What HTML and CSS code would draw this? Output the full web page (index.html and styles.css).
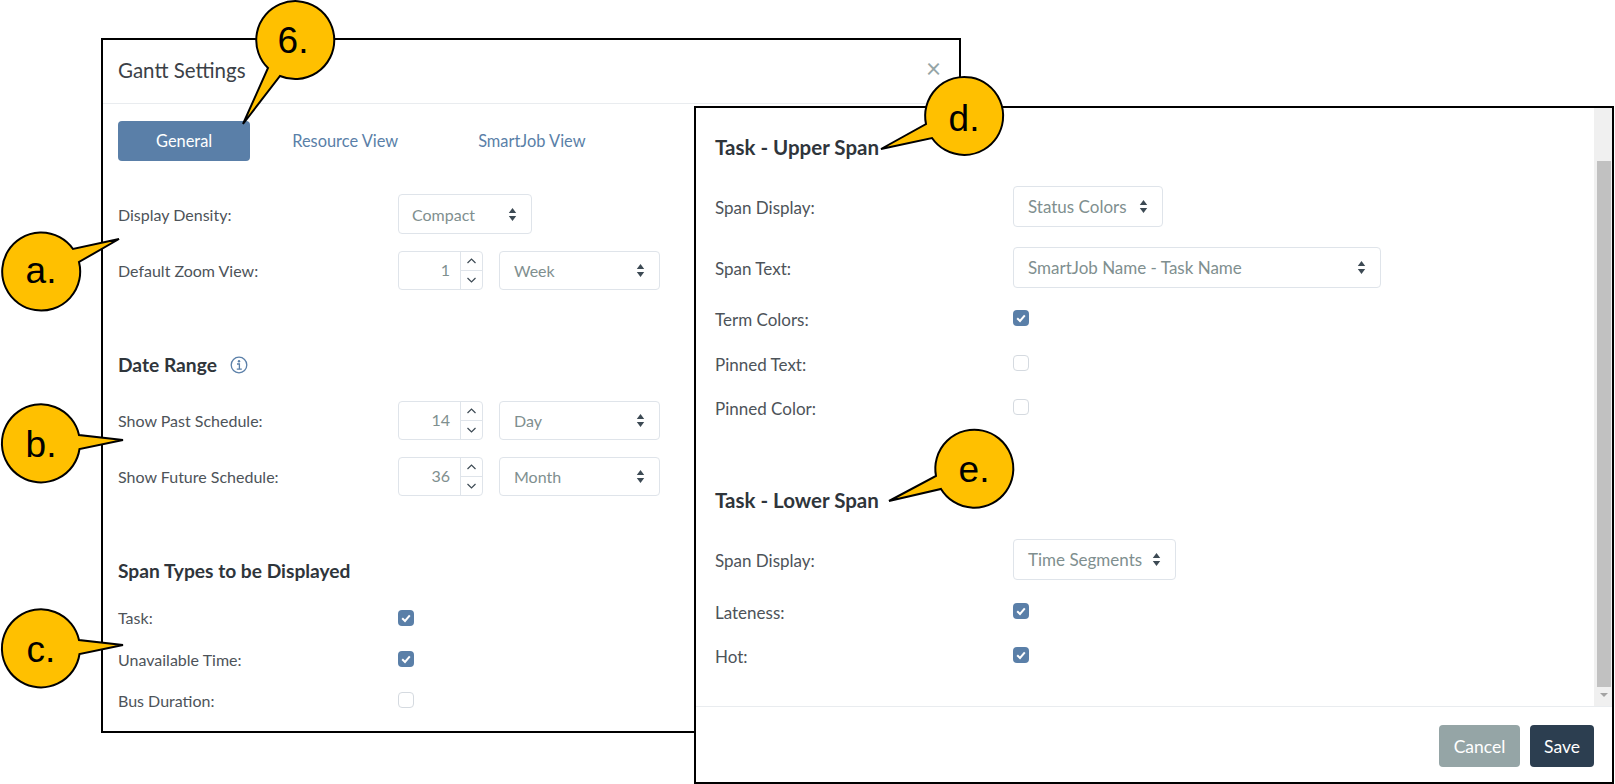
FILE: index.html
```html
<!DOCTYPE html>
<html lang="en">

<head>
  <meta charset="UTF-8">
  <title>Gantt Settings</title>
  <link rel="stylesheet" href="styles.css">
</head>

<body>
  <!-- General tab -->
  <section class="window window-general">
    <header class="window-header">
      <h2>Gantt Settings</h2>
      <span class="close">&times;</span>
    </header>
    <nav class="tabs">
      <a class="tab active">General</a>
      <a class="tab">Resource View</a>
      <a class="tab">SmartJob View</a>
    </nav>

    <div class="row density-row">
      <span class="label">Display Density:</span>
      <div class="select select-density"><span>Compact</span><svg class="carets" viewBox="0 0 8 14"><path d="M4 0 8 5.500H0zM4 14 0 8.500h8z"/></svg></div>
    </div>
    <div class="row row-next">
      <span class="label">Default Zoom View:</span>
      <div class="spinner"><span class="value">1</span><div class="spin"><svg viewBox="0 0 10 6"><path d="M1 5 5 1l4 4"/></svg><svg viewBox="0 0 10 6"><path d="M1 1l4 4 4-4"/></svg></div></div>
      <div class="select select-unit"><span>Week</span><svg class="carets" viewBox="0 0 8 14"><path d="M4 0 8 5.500H0zM4 14 0 8.500h8z"/></svg></div>
    </div>

    <h3 class="heading">Date Range
      <svg class="info" viewBox="0 0 18 18"><circle cx="9" cy="9" r="7.800"/><path d="M7 8h2.400v5M6.800 13.200h5"/><circle class="dot" cx="9" cy="5.300" r="1.200"/></svg>
    </h3>
    <div class="row row-first">
      <span class="label">Show Past Schedule:</span>
      <div class="spinner"><span class="value">14</span><div class="spin"><svg viewBox="0 0 10 6"><path d="M1 5 5 1l4 4"/></svg><svg viewBox="0 0 10 6"><path d="M1 1l4 4 4-4"/></svg></div></div>
      <div class="select select-unit"><span>Day</span><svg class="carets" viewBox="0 0 8 14"><path d="M4 0 8 5.500H0zM4 14 0 8.500h8z"/></svg></div>
    </div>
    <div class="row row-next">
      <span class="label">Show Future Schedule:</span>
      <div class="spinner"><span class="value">36</span><div class="spin"><svg viewBox="0 0 10 6"><path d="M1 5 5 1l4 4"/></svg><svg viewBox="0 0 10 6"><path d="M1 1l4 4 4-4"/></svg></div></div>
      <div class="select select-unit"><span>Month</span><svg class="carets" viewBox="0 0 8 14"><path d="M4 0 8 5.500H0zM4 14 0 8.500h8z"/></svg></div>
    </div>

    <h3 class="heading">Span Types to be Displayed</h3>
    <div class="check-row check-first">
      <span class="label">Task:</span>
      <span class="check on"><svg viewBox="0 0 16 16"><path d="M4.200 8.300 7 11l4.800-5.600"/></svg></span>
    </div>
    <div class="check-row">
      <span class="label">Unavailable Time:</span>
      <span class="check on"><svg viewBox="0 0 16 16"><path d="M4.200 8.300 7 11l4.800-5.600"/></svg></span>
    </div>
    <div class="check-row">
      <span class="label">Bus Duration:</span>
      <span class="check"></span>
    </div>
  </section>

  <!-- Resource view, scrolled -->
  <section class="window window-spans">
    <div class="scroll-area">
      <div class="span-form">
        <h3 class="heading heading-top">Task - Upper Span</h3>
        <div class="row row-tall row-first-tall">
          <span class="label">Span Display:</span>
          <div class="select select-status"><span>Status Colors</span><svg class="carets" viewBox="0 0 8 14"><path d="M4 0 8 5.500H0zM4 14 0 8.500h8z"/></svg></div>
        </div>
        <div class="row row-tall row-next-tall">
          <span class="label">Span Text:</span>
          <div class="select select-text"><span>SmartJob Name - Task Name</span><svg class="carets" viewBox="0 0 8 14"><path d="M4 0 8 5.500H0zM4 14 0 8.500h8z"/></svg></div>
        </div>
        <div class="check-row check-term">
          <span class="label">Term Colors:</span>
          <span class="check on"><svg viewBox="0 0 16 16"><path d="M4.200 8.300 7 11l4.800-5.600"/></svg></span>
        </div>
        <div class="check-row check-pinned">
          <span class="label">Pinned Text:</span>
          <span class="check"></span>
        </div>
        <div class="check-row check-color">
          <span class="label">Pinned Color:</span>
          <span class="check"></span>
        </div>

        <h3 class="heading heading-lower">Task - Lower Span</h3>
        <div class="row row-tall row-first-tall">
          <span class="label">Span Display:</span>
          <div class="select select-segments"><span>Time Segments</span><svg class="carets" viewBox="0 0 8 14"><path d="M4 0 8 5.500H0zM4 14 0 8.500h8z"/></svg></div>
        </div>
        <div class="check-row check-late">
          <span class="label">Lateness:</span>
          <span class="check on"><svg viewBox="0 0 16 16"><path d="M4.200 8.300 7 11l4.800-5.600"/></svg></span>
        </div>
        <div class="check-row check-late">
          <span class="label">Hot:</span>
          <span class="check on"><svg viewBox="0 0 16 16"><path d="M4.200 8.300 7 11l4.800-5.600"/></svg></span>
        </div>
      </div>
      <div class="scrollbar">
        <div class="thumb"></div>
        <div class="arrow"></div>
      </div>
    </div>
    <footer class="window-footer">
      <button class="btn btn-cancel">Cancel</button>
      <button class="btn btn-save">Save</button>
    </footer>
  </section>

  <!-- Callouts drawn over the screenshot -->
  <svg class="callouts" viewBox="0 0 1615 784">
    <path d="M268 68A39 39 0 1 1 280 76L243 124Z"/>
    <text x="293" y="53">6.</text>
    <path d="M79 262A39 39 0 1 1 73 249L119 239Z"/>
    <text x="41" y="283">a.</text>
    <path d="M79.500 449A39 39 0 1 1 79 435L123 440Z"/>
    <text x="41" y="457">b.</text>
    <path d="M79.500 654A39 39 0 1 1 79 640L123 645Z"/>
    <text x="41" y="662">c.</text>
    <path d="M926 124A39 39 0 1 1 932 138L881 149Z"/>
    <text x="964" y="131">d.</text>
    <path d="M936 476A39 39 0 1 1 941 489L889 501Z"/>
    <text x="974" y="482">e.</text>
  </svg>
</body>

</html>
```

FILE: styles.css
```css
/* Page */
body {
  margin: 0;
  width: 1615px;
  height: 784px;
  position: relative;
  overflow: hidden;
  background-color: #fff;
  font-family: 'Lato', sans-serif;
  font-size: 16px;
  color: #4d5359;
}

/* Windows */
.window {
  position: absolute;
  box-sizing: border-box;
  background-color: #fff;
  border: 2px solid #000;
}

.window-general {
  left: 101px;
  top: 38px;
  width: 860px;
  height: 695px;
  padding: 0 15px;
}

.window-spans {
  left: 694px;
  top: 106px;
  width: 920px;
  height: 678px;
  display: flex;
  flex-direction: column;
  font-size: 17px;
}

.window-header {
  display: flex;
  justify-content: space-between;
  align-items: center;
  height: 63px;
  margin: 0 -15px;
  padding: 0 18px 0 15px;
  border-bottom: 1px solid #e9ecef;
}

.window-header h2 {
  margin: 0 0 4px;
  font-size: 20.500px;
  font-weight: 400;
  color: #3b4147;
}

.close {
  font-size: 26px;
  line-height: 1;
  margin-bottom: 8px;
  color: #95a5a6;
}

/* Tabs */
.tabs {
  display: flex;
  gap: 4px;
  margin-top: 17px;
}

.tab {
  height: 40px;
  line-height: 40px;
  padding: 0 38px;
  border-radius: 4px;
  font-size: 16.400px;
  color: #5a7fa8;
}

.tab.active {
  background-color: #5a7fa8;
  color: #fff;
}

/* Form rows */
.row {
  display: flex;
  align-items: center;
  height: 39px;
}

.density-row {
  height: 40px;
  margin-top: 33px;
}

.row-next {
  margin-top: 17px;
}

.row-first {
  margin-top: 24px;
}

.label {
  flex: 0 0 280px;
}

.heading {
  margin: 63px 0 0;
  font-size: 19.200px;
  line-height: 24px;
  font-weight: 700;
  color: #2f353b;
}

.info {
  width: 18px;
  height: 18px;
  margin-left: 8px;
  vertical-align: -2px;
  fill: none;
  stroke: #5a7fa8;
  stroke-width: 1.300;
}

.info .dot {
  fill: #5a7fa8;
  stroke: none;
}

/* Selects */
.select {
  box-sizing: border-box;
  display: flex;
  justify-content: space-between;
  align-items: center;
  height: 100%;
  padding: 0 14px;
  background-color: #fff;
  border: 1.500px solid #dfe4ea;
  border-radius: 4px;
  color: #7f8f8f;
}

.carets {
  width: 9px;
  height: 13px;
  fill: #3d4a54;
}

.select-density {
  width: 134px;
  padding-left: 13px;
}

.select-unit {
  width: 161px;
  margin-left: 16px;
}

.select-status {
  width: 150px;
}

.select-text {
  width: 368px;
}

.select-segments {
  width: 163px;
}

/* Number spinner */
.spinner {
  box-sizing: border-box;
  display: flex;
  width: 85px;
  height: 100%;
  background-color: #fff;
  border: 1.500px solid #dfe4ea;
  border-radius: 4px;
  color: #7f8f8f;
}

.value {
  flex: 1;
  line-height: 36px;
  padding-right: 10px;
  text-align: right;
}

.spin {
  display: flex;
  flex-direction: column;
  width: 21px;
  border-left: 1px solid #dfe4ea;
}

.spin svg {
  flex: 1;
  min-height: 0;
  padding: 6px 4px;
  fill: none;
  stroke: #3d4a54;
  stroke-width: 1.200;
}

.spin svg + svg {
  border-top: 1px solid #dfe4ea;
}

/* Checkboxes */
.check-row {
  display: flex;
  align-items: flex-start;
  height: 24px;
  line-height: 24px;
  margin-top: 17px;
}

.check-first {
  margin-top: 23px;
}

.check-row + .check-row .label {
  padding-top: 1px;
}

.check {
  box-sizing: border-box;
  width: 16px;
  height: 16px;
  margin-top: 4px;
  border: 1.500px solid #d5dae0;
  border-radius: 4px;
  background-color: #fff;
}

.check.on {
  border: 0;
  background-color: #5a7fa8;
}

.check svg {
  display: block;
  fill: none;
  stroke: #fff;
  stroke-width: 2;
}

/* Span form */
.scroll-area {
  flex: 1;
  display: flex;
  min-height: 0;
}

.span-form {
  flex: 1;
  padding-left: 19px;
  min-width: 0;
}

.span-form .label {
  flex-basis: 298px;
}

.span-form .check-row .label {
  padding-top: 1px;
}

.span-form .heading {
  padding-bottom: 1px;
  font-size: 20.500px;
}

.span-form .heading-top {
  margin-top: 27px;
}

.span-form .heading-lower {
  margin-top: 68px;
}

.row-tall {
  height: 41px;
}

.row-tall .label {
  padding-top: 2px;
}

.row-first-tall {
  margin-top: 26px;
}

.row-next-tall {
  margin-top: 20px;
}

.check-term {
  margin-top: 19px;
}

.check-pinned {
  margin-top: 21px;
}

.check-color {
  margin-top: 20px;
}

.check-late {
  margin-top: 20px;
}

.span-form .check {
  margin-top: 3px;
}

/* Scrollbar */
.scrollbar {
  box-sizing: border-box;
  display: flex;
  flex-direction: column;
  flex: 0 0 18px;
  padding: 53px 1px 0 3px;
  background-color: #f0f0f0;
}

.thumb {
  flex: 1;
  background-color: #c1c1c1;
}

.arrow {
  align-self: center;
  width: 0;
  height: 0;
  margin: 6px 0 9px;
  border-left: 4px solid transparent;
  border-right: 4px solid transparent;
  border-top: 4px solid #a3a3a3;
}

/* Footer */
.window-footer {
  display: flex;
  justify-content: flex-end;
  gap: 10px;
  flex: 0 0 76px;
  padding: 18px 18px 0 0;
  box-sizing: border-box;
  border-top: 1px solid #e9ecef;
}

.btn {
  height: 42px;
  border: 0;
  border-radius: 4px;
  padding: 0;
  font-family: 'Lato', sans-serif;
  font-size: 17.500px;
  color: #fff;
}

.btn-cancel {
  width: 81px;
  background-color: #95a5a6;
}

.btn-save {
  width: 64px;
  background-color: #2c3e50;
}

/* Callouts */
.callouts {
  position: absolute;
  left: 0;
  top: 0;
  width: 1615px;
  height: 784px;
}

.callouts path {
  fill: #ffc000;
  stroke: #000;
  stroke-width: 2;
}

.callouts text {
  font-family: 'Liberation Sans', sans-serif;
  font-size: 37px;
  text-anchor: middle;
  fill: #000;
}
```
